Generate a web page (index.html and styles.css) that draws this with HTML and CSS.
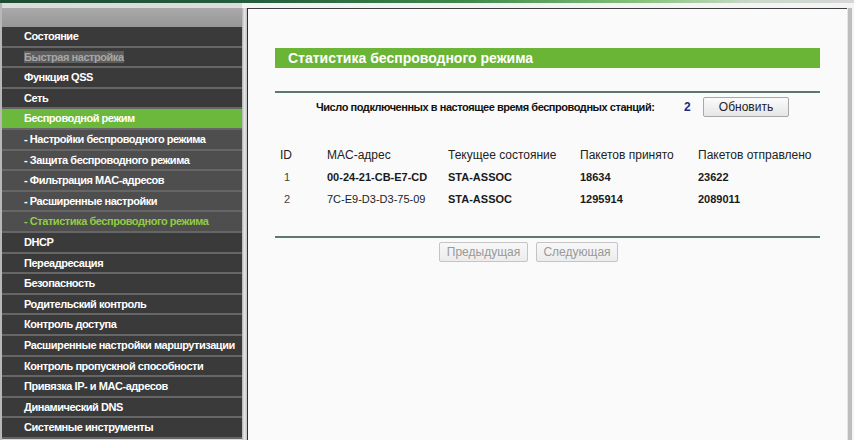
FILE: index.html
```html
<!DOCTYPE html>
<html lang="ru">
<head>
<meta charset="utf-8">
<title>Статистика беспроводного режима</title>
<link rel="stylesheet" href="styles.css">
</head>
<body>
<div class="topstrip"></div>
<div class="page">
  <nav class="sidebar">
    <div class="side-head"></div>
    <ul class="menu">
      <li class="item">Состояние</li>
      <li class="item"><span class="disabled">Быстрая настройка</span></li>
      <li class="item">Функция QSS</li>
      <li class="item">Сеть</li>
      <li class="item active">Беспроводной режим</li>
      <li class="item sub">- Настройки беспроводного режима</li>
      <li class="item sub">- Защита беспроводного режима</li>
      <li class="item sub">- Фильтрация MAC-адресов</li>
      <li class="item sub">- Расширенные настройки</li>
      <li class="item sub current">- Статистика беспроводного режима</li>
      <li class="item">DHCP</li>
      <li class="item">Переадресация</li>
      <li class="item">Безопасность</li>
      <li class="item">Родительский контроль</li>
      <li class="item">Контроль доступа</li>
      <li class="item">Расширенные настройки маршрутизации</li>
      <li class="item">Контроль пропускной способности</li>
      <li class="item">Привязка IP- и MAC-адресов</li>
      <li class="item">Динамический DNS</li>
      <li class="item">Системные инструменты</li>
    </ul>
  </nav>
  <div class="split"></div>
  <main class="content">
    <div class="inner">
      <h1 class="title">Статистика беспроводного режима</h1>
      <div class="rule rule-top"></div>
      <div class="refresh">
        <span class="refresh-label">Число подключенных в настоящее время беспроводных станций:</span>
        <span class="count">2</span>
        <button class="btn btn-refresh" type="button">Обновить</button>
      </div>
      <div class="table">
        <div class="row head">
          <span class="id">ID</span><span>MAC-адрес</span><span>Текущее состояние</span><span>Пакетов принято</span><span>Пакетов отправлено</span>
        </div>
        <div class="row data">
          <span class="id">1</span><span>00-24-21-CB-E7-CD</span><span>STA-ASSOC</span><span>18634</span><span>23622</span>
        </div>
        <div class="row data">
          <span class="id">2</span><span class="thin">7C-E9-D3-D3-75-09</span><span>STA-ASSOC</span><span>1295914</span><span>2089011</span>
        </div>
      </div>
      <div class="rule rule-bottom"></div>
      <div class="pager">
        <button class="btn btn-prev" type="button" disabled>Предыдущая</button>
        <button class="btn btn-next" type="button" disabled>Следующая</button>
      </div>
    </div>
  </main>
  <div class="rbar"></div>
</div>
</body>
</html>
```

FILE: styles.css
```css
html, body {
  margin: 0;
  padding: 0;
}
body {
  width: 854px;
  height: 440px;
  overflow: hidden;
  background: #f4f4f4;
  font-family: "Liberation Sans", Arial, sans-serif;
}
.topstrip {
  height: 3px;
  background: linear-gradient(to right, #1e4d33 0%, #245e3c 30%, #3f8a4c 55%, #86c27a 75%, #c9d9c9 88%, #d6d6d6 100%);
}
.page {
  display: flex;
  height: 437px;
}
.sidebar {
  width: 240px;
  border-left: 2px solid #b8b8b8;
  background: #dcdcdc;
  padding-top: 5px;
}
.side-head {
  height: 19px;
  background: linear-gradient(#a9a9a9, #979797);
}
.menu {
  list-style: none;
  margin: 0;
  padding: 0;
}
.item {
  height: 18.6px;
  line-height: 18.6px;
  border-bottom: 2px solid #666666;
  background: #3a3a3a;
  color: #ffffff;
  font-size: 11px;
  font-weight: bold;
  letter-spacing: -0.45px;
  padding-left: 22px;
  white-space: nowrap;
  overflow: hidden;
}
.item.sub {
  background: #4e4e4e;
}
.item.active {
  background: #6cb83c;
}
.item.current {
  color: #92cc45;
}
.disabled {
  color: #a6a6a6;
  background: #5e5e5e;
  font-weight: bold;
}
.split {
  width: 5px;
  margin-top: 5px;
  background: linear-gradient(to right, #b4b4b4, #e4e4e4 50%, #c4c4c4);
  border-right: 1px solid #2e2e2e;
}
.content {
  width: 599px;
  margin-top: 5px;
  border-top: 1px solid #3f3f3f;
  background: #fafafa;
}
.rbar {
  width: 4px;
  margin-top: 5px;
  background: #bdbdbd;
  border-left: 1px solid #e6e6e6;
}
.inner {
  padding: 38.5px 27px 0 27px;
}
.title {
  margin: 0;
  height: 20px;
  line-height: 20px;
  background: #6ab536;
  color: #ffffff;
  font-size: 14px;
  font-weight: bold;
  padding-left: 13px;
}
.rule {
  height: 2px;
  background: #5b7a6c;
}
.rule-top {
  margin-top: 23px;
}
.refresh {
  margin-top: 4px;
  height: 20px;
  display: flex;
  align-items: center;
  padding-left: 41px;
  font-size: 11px;
  font-weight: bold;
  color: #111;
}
.refresh-label {
  width: 368px;
  letter-spacing: -0.45px;
}
.count {
  width: 19px;
  color: #1c2a86;
  font-size: 12px;
}
.btn {
  font-family: "Liberation Sans", Arial, sans-serif;
  font-size: 12px;
  height: 20px;
  padding: 0;
  border: 1px solid #a8a8a8;
  border-radius: 2px;
  background: linear-gradient(#fbfbfb, #e6e6e6);
  color: #222;
}
.btn-refresh {
  width: 86px;
}
.table {
  margin-top: 27px;
}
.row {
  display: grid;
  grid-template-columns: 47px 121px 132px 118px 1fr;
  height: 22px;
  align-items: center;
  padding-left: 5px;
  font-size: 11px;
  font-weight: bold;
  color: #1a1a1a;
}
.row.head {
  font-size: 12px;
  font-weight: normal;
  color: #222;
}
.row .id {
  width: 14px;
  text-align: center;
  font-weight: normal;
  color: #444;
}
.row.head .id {
  color: #222;
  text-align: left;
}
.thin {
  font-weight: normal;
}
.rule-bottom {
  margin-top: 26px;
}
.pager {
  margin-top: 4px;
  display: flex;
  gap: 8px;
  padding-left: 164px;
}
.btn-prev,
.btn-next {
  border-color: #c4c4c4;
  color: #999;
  background: linear-gradient(#f8f8f8, #ececec);
}
.btn-prev {
  width: 89px;
}
.btn-next {
  width: 82px;
}
```
